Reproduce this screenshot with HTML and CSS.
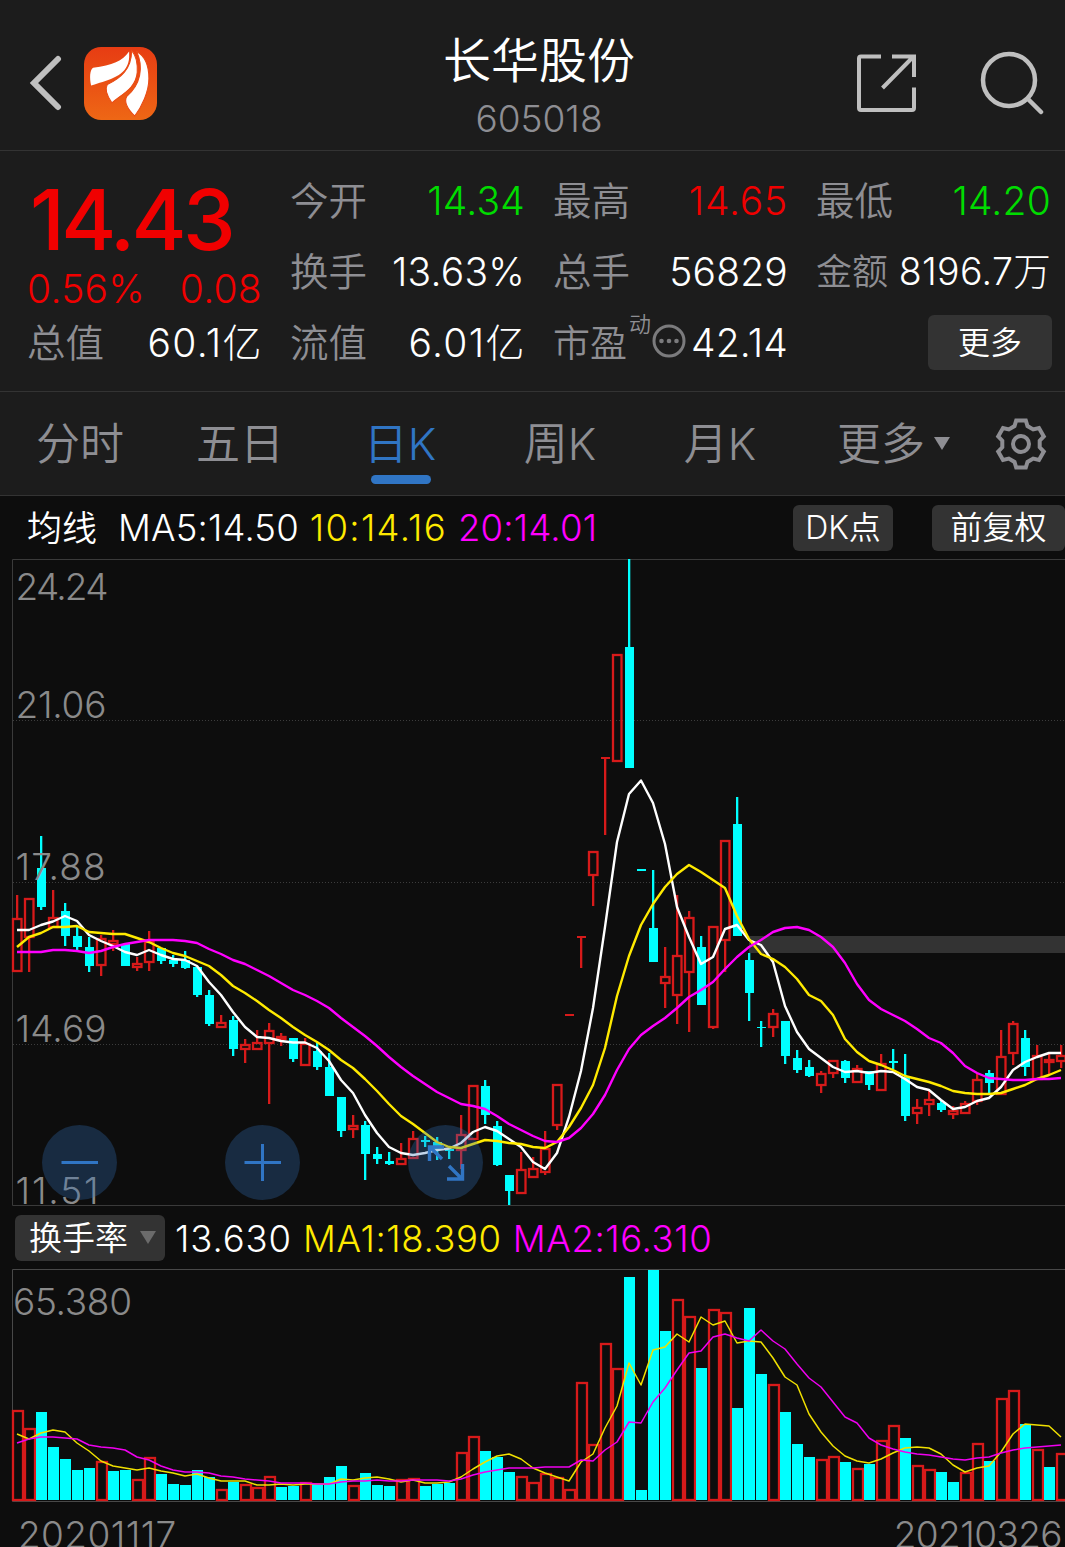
FILE: index.html
```html
<!DOCTYPE html>
<html lang="zh-CN">
<head>
    <meta charset="UTF-8">
    <meta name="viewport" content="width=device-width, initial-scale=1.0">
    <title>长华股份 605018</title>
    <link rel="stylesheet" href="styles.css">
</head>
<body>
    <header class="header">
        <div class="header-left">
            <svg class="back-icon" width="34" height="56" viewBox="0 0 34 56">
                <path d="M29 4L5 28L29 52" fill="none" stroke="#bfbfbf" stroke-width="6" stroke-linecap="round"/>
            </svg>
            <svg class="logo" width="73" height="73" viewBox="0 0 72 72">
                <defs>
                    <linearGradient id="logo-bg" x1="0" y1="0" x2="0" y2="1">
                        <stop offset="0" stop-color="#e73c13"/>
                        <stop offset="1" stop-color="#ee6715"/>
                    </linearGradient>
                </defs>
                <rect width="72" height="72" rx="17" fill="url(#logo-bg)"/>
                <g fill="#fff">
                    <path d="M44.500 4.500C38 14 28 18 9 20.500C5.500 22.500 5.500 31 7 38C22 33 39 30 43.500 16C45 12 44.500 8 44.500 4.500Z"/>
                    <path d="M47 3.500C47 22 36 31 23 37C20 42 24 50 27.500 55C38 46 51 41 52.500 25C53 15 51 8 47 3.500Z" stroke="#e94a14" stroke-width="1"/>
                    <path d="M52 4.500C59 20 56 37 42 49C39 55 44 62 50 68C57 59 64 44 64 31C64 18 60 9 52 4.500Z" stroke="#e94a14" stroke-width="1"/>
                </g>
            </svg>
        </div>
        <div class="header-title">
            <h1>长华股份</h1>
            <div class="code">605018</div>
        </div>
        <div class="header-right">
            <svg width="60" height="60" viewBox="0 0 60 60" fill="none" stroke="#bfbfbf" stroke-width="4">
                <path d="M25 3.500H5Q3 3.500 3 5.500V55Q3 57 5 57H56Q58 57 58 55V34.500"/>
                <path d="M36 3.500H58V24M57 4L26.500 35"/>
            </svg>
            <svg width="64" height="64" viewBox="0 0 64 64" fill="none" stroke="#bfbfbf" stroke-width="4.500">
                <circle cx="29" cy="29" r="26"/>
                <path d="M48 48L61 61" stroke-linecap="round"/>
            </svg>
        </div>
    </header>

    <section class="quote">
        <div class="price-box">
            <div class="price">14.43</div>
            <div class="change"><span>0.56%</span><span>0.08</span></div>
        </div>
        <div class="item"><label>今开</label><span class="green">14.34</span></div>
        <div class="item"><label>最高</label><span class="red">14.65</span></div>
        <div class="item"><label>最低</label><span class="green">14.20</span></div>
        <div class="item"><label>换手</label><span>13.63%</span></div>
        <div class="item"><label>总手</label><span>56829</span></div>
        <div class="item tight"><label>金额</label><span>8196.7万</span></div>
        <div class="item cap"><label>总值</label><span>60.1亿</span></div>
        <div class="item cap"><label>流值</label><span>6.01亿</span></div>
        <div class="item pe">
            <label>市盈<sup>动</sup></label>
            <svg width="34" height="34" viewBox="0 0 34 34">
                <circle cx="17" cy="17" r="15" fill="none" stroke="#7b7b7d" stroke-width="3"/>
                <g fill="#7b7b7d"><circle cx="9.500" cy="17" r="2.300"/><circle cx="17" cy="17" r="2.300"/><circle cx="24.500" cy="17" r="2.300"/></g>
            </svg>
            <span>42.14</span>
        </div>
        <div class="item last"><button class="more-btn">更多</button></div>
    </section>

    <nav class="tabs">
        <a class="tab">分时</a>
        <a class="tab">五日</a>
        <a class="tab active">日K</a>
        <a class="tab">周K</a>
        <a class="tab">月K</a>
        <a class="tab tab-more">更多<i class="arrow"></i></a>
        <svg class="gear" width="54" height="54" viewBox="-27 -27 54 54" fill="none" stroke="#8e8e93" stroke-width="4">
            <path id="gear-path" stroke-linejoin="miter"/>
            <circle r="8"/>
        </svg>
    </nav>

    <div class="legend">
        <span class="legend-name">均线</span>
        <span class="ma5">MA5:14.50</span>
        <span class="yellow">10:14.16</span>
        <span class="pink">20:14.01</span>
        <button class="chip dk">DK点</button>
        <button class="chip fq">前复权</button>
    </div>

    <svg id="kline" class="chart" width="1065" height="647" viewBox="0 559 1065 647"></svg>

    <div class="legend sub">
        <button class="chip select">换手率<i class="arrow"></i></button>
        <span class="cur">13.630</span>
        <span class="yellow">MA1:18.390</span>
        <span class="pink">MA2:16.310</span>
    </div>

    <svg id="volume" class="chart" width="1065" height="233" viewBox="0 1269 1065 233"></svg>

    <div class="dates"><span>20201117</span><span class="date-end">20210326</span></div>

    <script>
        const RED = '#d71a1a';
        const CYAN = '#00ffff';

        // [color, high, body top, body bottom, low]
        const candles = [
            ['R',895,918,972,972],['R',898,898,938,972],['C',836,868,907,910],['R',890,917,928,928],['C',903,911,936,946],
            ['C',927,936,947,950],['C',937,947,966,972],['R',935,938,966,976],['R',930,940,945,951],['C',944,944,966,966],
            ['R',957,963,968,971],['R',931,941,963,971],['C',948,948,961,964],['C',955,960,964,967],['C',951,960,968,969],
            ['C',967,967,995,997],['C',990,995,1024,1026],['R',1015,1022,1028,1028],['C',1016,1020,1049,1056],['R',1039,1044,1050,1063],
            ['R',1030,1042,1050,1050],['R',1023,1030,1044,1104],['R',1033,1036,1040,1046],['C',1038,1038,1059,1062],['R',1038,1043,1066,1066],
            ['C',1042,1051,1067,1070],['C',1053,1067,1096,1096],['C',1097,1097,1131,1137],['R',1115,1125,1130,1138],['C',1121,1125,1154,1180],
            ['C',1147,1154,1159,1164],['C',1152,1161,1164,1165],['R',1143,1158,1165,1165],['R',1131,1138,1159,1159],['C',1136,1140,1142,1147],
            ['C',1137,1142,1149,1160],['C',1147,1149,1151,1159],['R',1115,1134,1151,1169],['R',1085,1085,1140,1140],['C',1080,1086,1115,1124],
            ['C',1121,1126,1165,1166],['C',1175,1175,1191,1205],['R',1152,1169,1194,1194],['R',1157,1168,1178,1178],['R',1131,1148,1173,1175],
            ['R',1084,1084,1126,1130],['R',1014,1014,1016,1016],['R',936,936,938,968],['R',851,851,876,906],['R',757,757,759,835],
            ['R',654,654,762,762],['C',559,647,768,768],['C',869,869,871,871],['C',870,928,962,962],['R',947,976,984,1008],
            ['R',895,955,996,1024],['R',911,917,973,1032],['C',936,947,1005,1005],['R',926,926,1028,1029],['R',840,840,941,972],
            ['C',797,824,936,936],['C',953,960,993,1021],['C',1021,1027,1028,1047],['R',1009,1013,1028,1037],['C',1021,1021,1056,1064],
            ['C',1050,1058,1070,1073],['C',1060,1067,1076,1077],['R',1071,1073,1086,1093],['R',1060,1060,1074,1078],['C',1060,1061,1078,1083],
            ['R',1065,1068,1083,1083],['C',1071,1071,1085,1090],['R',1054,1063,1091,1091],['C',1049,1061,1063,1069],['C',1054,1077,1116,1121],
            ['R',1099,1107,1114,1124],['R',1091,1099,1105,1116],['C',1100,1103,1110,1112],['R',1106,1110,1115,1119],['R',1101,1103,1114,1114],
            ['R',1074,1079,1102,1105],['C',1070,1073,1083,1094],['R',1030,1056,1095,1095],['R',1021,1023,1054,1065],['C',1030,1038,1067,1076],
            ['R',1045,1055,1080,1080],['R',1054,1059,1063,1075],['R',1045,1055,1062,1068]
        ];

        const ma5 = [930,930,925,921.5,916,921,935,941,946,952,955,950,955,959,960,966,982,995,1012,1027,1037,1038,1041,1042.5,1042.5,1048,1061,1080,1093,1115,1133,1147,1153,1155,1153,1150,1148.5,1143,1132,1127,1131,1139,1147,1162,1169,1153,1117,1071,1008,927,842,794,780.5,803,844,907,937,964,957,929,925,940,945,962,1006,1032,1049,1058,1067,1072,1071,1073,1071,1072,1079,1087,1090,1100,1109,1107,1101,1098,1087,1070,1062,1057,1053,1053];
        const ma10 = [947,937,933,927,927,926,932,933,934,934,938,942,948,953,956,961,966,975,986,993,1001,1010,1018,1027,1035,1042,1050,1060,1068,1079,1091,1104,1116,1124,1133,1142,1147,1148,1144,1140,1141,1143,1144,1147,1148,1142,1127,1108,1085,1048,996,956,925,904,887,874,865,872,880,888,916,939,954,959,967,979,995,1001,1015,1039,1052,1061,1065,1070,1076,1079,1082,1086,1091,1093,1094,1094,1093,1089,1085,1079,1075,1070];
        const ma20 = [952,952,952,950,950,951,953,951,947,944,942,940,940,940,941,943,949,954,960,964,970,976,983,990,995,1001,1008,1018,1027,1036,1046,1057,1067,1076,1084,1092,1098,1104,1106,1109,1116,1124,1130,1136,1141,1142,1138,1128,1114,1095,1070,1049,1035,1026,1018,1008,997,990,982,969,957,947,940,932,928,927,930,937,947,963,984,1000,1009,1015,1021,1029,1038,1043,1053,1066,1073,1078,1079,1080,1080,1079,1079,1078];

        const volColors = 'RRCCCCCRCCRRCCCCCRCRRRCCRCCCRCCCRRCCCRRCCCRRRRRRRRRCCCCRRCRRCCCRCCCRRCRCRRCRRCCRRCRRCRCR';
        const vols = [1410,1428,1412,1447,1459,1470,1468,1461,1471,1470,1479,1457,1474,1484,1485,1470,1477,1489,1482,1484,1487,1476,1487,1486,1482,1484,1477,1466,1485,1473,1485,1486,1479,1478,1486,1484,1483,1452,1436,1451,1457,1472,1476,1482,1473,1477,1489,1382,1444,1343,1368,1277,1490,1270,1331,1299,1316,1368,1309,1312,1408,1308,1374,1384,1412,1444,1457,1459,1456,1462,1468,1464,1440,1425,1438,1465,1469,1472,1482,1472,1443,1461,1398,1390,1424,1449,1467,1453];
        const vma1 = [1434,1439,1433,1430,1432,1443,1451,1461,1466,1468,1470,1468,1471,1473,1476,1474,1478,1481,1481,1481,1485,1485,1484,1485,1484,1484,1484,1479,1480,1478,1477,1479,1482,1480,1483,1483,1482,1477,1469,1462,1456,1454,1459,1468,1473,1477,1481,1462,1454,1428,1406,1363,1385,1350,1347,1334,1342,1317,1325,1321,1343,1341,1342,1358,1377,1385,1414,1432,1446,1456,1461,1463,1459,1453,1448,1447,1448,1454,1465,1472,1468,1466,1452,1434,1424,1425,1426,1437];
        const vma2 = [1443,1439,1437,1437,1438,1439,1445,1447,1448,1450,1457,1460,1466,1470,1472,1472,1473,1476,1477,1479,1480,1481,1483,1483,1483,1484,1484,1482,1481,1481,1480,1481,1481,1480,1480,1480,1481,1479,1475,1472,1470,1468,1468,1468,1467,1467,1467,1460,1461,1450,1442,1422,1423,1402,1388,1370,1353,1351,1337,1334,1338,1341,1330,1341,1349,1364,1378,1387,1402,1417,1423,1438,1445,1449,1452,1454,1455,1457,1459,1460,1458,1457,1453,1450,1448,1447,1446,1445];

        const cx = i => 17 + i * 12;

        function rect(x, y, w, h, fill) {
            return `<rect x="${x}" y="${y}" width="${w}" height="${h}" fill="${fill}"/>`;
        }

        function box(x, y, w, h) {
            return `<rect x="${x}" y="${y}" width="${w}" height="${h}" fill="none" stroke="${RED}" stroke-width="2.3"/>`;
        }

        function line(points, color, width) {
            const p = points.map((y, i) => cx(i) + ',' + y).join(' ');
            return `<polyline points="${p}" fill="none" stroke="${color}" stroke-width="${width}" stroke-linejoin="round"/>`;
        }

        function drawCandle(c, i) {
            const [type, high, top, bottom, low] = c;
            const x = cx(i);
            const color = type === 'R' ? RED : CYAN;
            let out = '';
            if (top > high) out += rect(x - 1, high, 2.3, top - high, color);
            if (low > bottom) out += rect(x - 1, bottom, 2.3, low - bottom, color);
            if (type === 'C' || bottom - top < 4) {
                out += rect(x - 4, top, 9, bottom - top, color);
            } else {
                out += box(x - 4, top + 1, 8.5, bottom - top - 2);
            }
            return out;
        }

        function drawKline() {
            let out = '<path d="M1065 559.5H12.500V1205.500H1065" fill="none" stroke="#3a3a3a"/>';
            [720.5, 882.5, 1044.5].forEach(y => {
                out += `<path d="M13 ${y}H1065" stroke="#3c3c3c" stroke-dasharray="1 2"/>`;
            });
            out += candles.map(drawCandle).join('');
            out += rect(749, 936, 316, 17, '#333');
            out += line(ma5, '#fff', 2.4) + line(ma10, '#ffea00', 2.4) + line(ma20, '#ff00ff', 2.4);
            [['24.24', 600, 93], ['21.06', 718, 91], ['17.88', 880, 90], ['14.69', 1042, 91], ['11.51', 1203.5, 83]].forEach(t => {
                out += `<text class="axis" x="15.5" y="${t[1]}" textLength="${t[2]}">${t[0]}</text>`;
            });
            // zoom out, zoom in, full screen
            [79.5, 262.5, 445.5].forEach(x => {
                out += `<circle cx="${x}" cy="1162.500" r="37.500" fill="#3271ba" fill-opacity="0.300"/>`;
            });
            out += '<g fill="none" stroke="#3075c4" stroke-width="3">' +
                '<path d="M61.500 1162.500H98M244.500 1162.500H281M262.500 1144V1181"/>' +
                '<path d="M429.500 1161V1147H444M430 1147L442 1159M462.500 1164V1179H447M462 1179L449 1166" stroke-width="3.400"/></g>';
            document.getElementById('kline').innerHTML = out;
        }

        function drawVolume() {
            let out = '<path d="M1065 1269.500H12.500V1501.500H1065" fill="none" stroke="#484848"/>';
            vols.forEach((y, i) => {
                const x = cx(i);
                out += volColors[i] === 'C' ? rect(x - 5, y, 11, 1500 - y, CYAN) : box(x - 4, y + 1, 10, 1500 - y - 1);
            });
            out += line(vma1, '#f0e000', 1.5) + line(vma2, '#f000f0', 1.5);
            out += '<text class="axis" x="13" y="1315" textLength="119">65.380</text>';
            document.getElementById('volume').innerHTML = out;
        }

        function drawGear() {
            const pts = [];
            for (let k = 0; k < 6; k++) {
                [[-20, 19], [-11.5, 24], [11.5, 24], [20, 19]].forEach(([a, r]) => {
                    const t = (k * 60 - 90 + a) * Math.PI / 180;
                    pts.push((r * Math.cos(t)).toFixed(1) + ' ' + (r * Math.sin(t)).toFixed(1));
                });
            }
            document.getElementById('gear-path').setAttribute('d', 'M' + pts.join('L') + 'Z');
        }

        drawKline();
        drawVolume();
        drawGear();
    </script>
</body>
</html>
```
FILE: styles.css
```css
* {
    box-sizing: border-box;
}

body {
    margin: 0;
    width: 1065px;
    height: 1547px;
    overflow: hidden;
    background-color: #0d0d0d;
    color: #fff;
    font-family: Inter, "Noto Sans CJK SC", sans-serif;
    font-weight: 300;
}

button {
    border: none;
    padding: 0;
    color: #fff;
    font-family: inherit;
    font-weight: 350;
    background-color: #333;
    border-radius: 6px;
}

.header {
    display: grid;
    grid-template-columns: 300px 1fr 300px;
    height: 151px;
    padding-top: 16px;
    background-color: #1c1c1c;
    border-bottom: 1px solid #333;
}

.header-left {
    display: flex;
    align-items: center;
    padding-left: 29px;
}

.logo {
    margin-left: 21px;
}

.header-title {
    text-align: center;
    padding-left: 13px;
}

h1 {
    margin: 9px 0 0;
    font-size: 48px;
    font-weight: 350;
    line-height: 72px;
}

.code {
    margin-top: 3px;
    font-size: 37px;
    line-height: 38px;
    color: #8e8e93;
}

.header-right {
    display: flex;
    align-items: center;
    justify-content: flex-end;
    gap: 64px;
    padding-right: 21px;
}

.quote {
    display: grid;
    grid-template-columns: repeat(4, 235px);
    grid-template-rows: repeat(3, 71px);
    column-gap: 28px;
    height: 241px;
    padding: 14px 14px 0 27px;
    background-color: #1c1c1c;
    border-bottom: 1px solid #333;
}

.price-box {
    grid-row: span 2;
    color: #f00000;
}

.price {
    margin-top: 13px;
    padding-left: 3px;
    font-size: 84px;
    font-weight: 500;
    line-height: 84px;
    letter-spacing: -3.7px;
}

.change {
    display: flex;
    justify-content: space-between;
    font-size: 39px;
    line-height: 54px;
    letter-spacing: 0.3px;
}

.item {
    display: flex;
    align-items: baseline;
    justify-content: space-between;
    white-space: nowrap;
    font-size: 39px;
    line-height: 71px;
    letter-spacing: 0.2px;
}

.item label {
    font-size: 38.5px;
    font-weight: 350;
    letter-spacing: 0;
    color: #8e8e93;
}

.item .green {
    color: #00dc00;
}

.item .red {
    color: #f00000;
    letter-spacing: 0.8px;
}

.item.tight label {
    font-size: 36px;
}

.item.tight span {
    font-size: 37.5px;
    font-weight: 320;
    letter-spacing: 0.3px;
}

.item.cap span {
    letter-spacing: 1.4px;
    margin-right: -1px;
}

.item.pe label {
    position: relative;
    font-size: 37px;
}

.pe sup {
    position: absolute;
    left: 76px;
    top: 1px;
    font-size: 22px;
    line-height: 30px;
}

.pe svg {
    align-self: center;
    margin-left: 20px;
    margin-top: -4px;
}

.item.last {
    align-items: center;
    justify-content: flex-end;
}

.more-btn {
    width: 124px;
    height: 55px;
    margin-right: -1px;
    font-size: 32px;
    line-height: 55px;
}

.tabs {
    display: flex;
    align-items: center;
    height: 104px;
    background-color: #1c1c1c;
    border-bottom: 1px solid #333;
    font-size: 44px;
    font-weight: 350;
    color: #8e8e93;
}

.tab {
    position: relative;
    width: 160px;
    text-align: center;
    line-height: 106px;
}

.tab.active {
    color: #3075c4;
}

.tab.active::after {
    content: "";
    position: absolute;
    left: 51px;
    bottom: 13px;
    width: 60px;
    height: 9px;
    border-radius: 5px;
    background-color: #3075c4;
}

.tab-more {
    display: flex;
    align-items: center;
    width: 194px;
    padding-left: 37px;
}

.arrow {
    width: 16px;
    height: 13px;
    background-color: #8e8e93;
    clip-path: polygon(0 0, 100% 0, 50% 100%);
}

.tab-more .arrow {
    margin-left: 9px;
}

.legend {
    display: flex;
    align-items: center;
    height: 63px;
    padding-top: 1px;
    font-size: 36.5px;
    line-height: 62px;
    white-space: nowrap;
}

.legend-name {
    width: 91px;
    margin-left: 27px;
    font-size: 35px;
    font-weight: 350;
}

.yellow {
    color: #ffea00;
    letter-spacing: 1.3px;
}

.pink {
    color: #ff00ff;
    letter-spacing: 0.2px;
}

.ma5 {
    letter-spacing: 0.15px;
}

.legend .yellow,
.legend .pink {
    margin-left: 11px;
}

.chip {
    height: 46px;
    margin-top: -1px;
    font-size: 32px;
    line-height: 46px;
}

.dk {
    width: 100px;
    margin-left: auto;
}

.fq {
    width: 133px;
    margin-left: 39px;
    flex-shrink: 0;
}

.sub {
    padding-top: 2px;
    padding-left: 15px;
}

.select {
    display: flex;
    align-items: center;
    justify-content: space-between;
    width: 150px;
    margin-top: -2px;
    padding: 0 9px 0 14px;
    font-size: 33px;
}

.select .arrow {
    background-color: #6b6b6b;
}

.cur {
    margin-left: 10px;
    letter-spacing: 0.9px;
}

.sub .yellow,
.sub .pink {
    letter-spacing: 0.6px;
}

.chart {
    display: block;
}

.axis {
    font-size: 37px;
    fill: #8a8a8a;
}

.dates {
    display: flex;
    justify-content: space-between;
    padding: 14px 3px 0 18px;
    font-size: 37px;
    line-height: 38px;
    letter-spacing: 0.4px;
    color: #8a8a8a;
}

.date-end {
    letter-spacing: -0.6px;
}
```
